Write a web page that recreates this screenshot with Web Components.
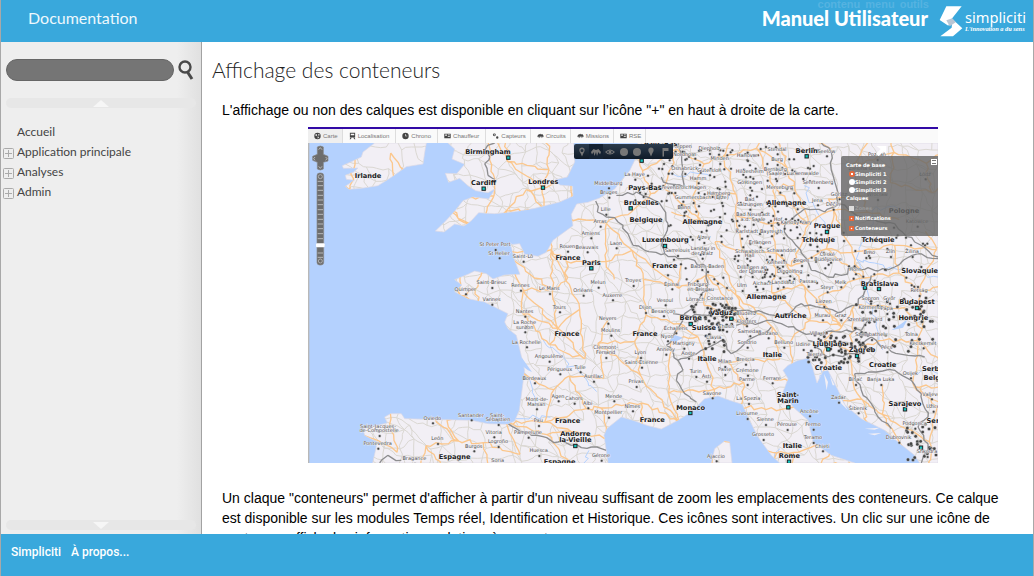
<!DOCTYPE html>
<html lang="fr">
<head>
<meta charset="utf-8">
<title>Affichage des conteneurs - Manuel Utilisateur</title>
<style>
html, body { margin: 0; height: 100%; }
body { font-family: "Liberation Sans", Arial, sans-serif; font-size: 14px; color: #000; overflow: hidden; }
</style>
</head>
<body>
<manual-page>
  <manual-header slot="header"></manual-header>
  <manual-sidebar slot="sidebar"></manual-sidebar>
  <manual-article slot="content" heading="Affichage des conteneurs">
    <p>L'affichage ou non des calques est disponible en cliquant sur l’icône "+" en haut à droite de la carte.</p>
    <map-figure></map-figure>
    <p>Un claque "conteneurs" permet d'afficher à partir d'un niveau suffisant de zoom les emplacements des conteneurs. Ce calque est disponible sur les modules Temps réel, Identification et Historique. Ces icônes sont interactives. Un clic sur une icône de conteneur affiche les informations relatives à ce conteneur.</p>
  </manual-article>
  <manual-footer slot="footer"></manual-footer>
</manual-page>

<script>
const define = (name, markup, setup) => {
  const template = document.createElement('template');
  template.innerHTML = markup;
  customElements.define(name, class extends HTMLElement {
    constructor() {
      super();
      this.attachShadow({ mode: 'open' }).append(template.content.cloneNode(true));
    }
    connectedCallback() { if (setup) setup(this.shadowRoot, this); }
  });
};

define('manual-header', `
<style>
:host { display: flex; align-items: center; justify-content: space-between; position: relative; height: 42px; background: #39a8dc; color: #fff; overflow: hidden; }
.doc { font: 400 16px/20px Lato, sans-serif; padding: 0 0 6px 27px; color: #eef8fd; text-decoration: none; }
.brand { display: flex; align-items: center; gap: 11px; padding-right: 6px; }
.title { font: 900 20px/22px Lato, sans-serif; padding-bottom: 6px; }
.skip { position: absolute; top: -2px; right: 104px; display: flex; gap: 5px; font: bold 11px/13px "Liberation Sans", sans-serif; }
.skip a { color: #55b3e1; text-decoration: none; }
svg { display: block; width: 88px; height: 36px; }
</style>
<a class="doc" href="#">Documentation</a>
<nav class="skip" aria-label="Accès rapide"><a href="#contenu">contenu</a><a href="#menu">menu</a><a href="#outils">outils</a></nav>
<div class="brand">
  <span class="title">Manuel Utilisateur</span>
  <svg viewBox="0 0 264 108" role="img" aria-label="simpliciti">
    <path d="M22 10H68L36 50 28 68 2 51ZM40 48L70 76 42 100H4L38 74Z" fill="#fff"/>
    <path d="M22 52L40 46 50 58 32 70Z" fill="#b9c6d4"/>
    <text x="78" y="61" font-family="Noto Sans, sans-serif" font-size="44" fill="#fff">simpliciti</text>
    <text x="78" y="85" font-family="Liberation Serif, serif" font-size="19" font-style="italic" font-weight="bold" fill="#fff">L'innovation a du sens</text>
  </svg>
</div>`);

define('scroll-bar', `
<style>
:host { display: block; }
button { display: flex; align-items: center; justify-content: center; width: 100%; height: 10px; padding: 0; border: 0; border-radius: 5px; background: #e7e7e7; }
svg { width: 16px; height: 7px; fill: #f6f6f6; }
:host([down]) svg { transform: rotate(180deg); }
</style>
<button type="button" aria-label="Faire défiler"><svg viewBox="0 0 16 7"><path d="M8 0L16 7H0Z"/></svg></button>`);

define('menu-item', `
<style>
:host { display: flex; align-items: center; gap: 3px; height: 20px; }
a { color: #444; text-decoration: none; font: 12px/20px Lato, sans-serif; }
button { width: 11px; height: 11px; padding: 0; border: 0; background: none; margin-top: 3px; }
svg { display: block; }
:host(:not([branch])) button { visibility: hidden; }
</style>
<button type="button" aria-label="Déplier"><svg width="11" height="11" viewBox="0 0 11 11" fill="none" stroke="#aaa"><rect x=".5" y=".5" width="10" height="10" rx="1"/><path d="M2 5.5H9M5.5 2V9"/></svg></button>
<a href="#"><slot></slot></a>`);

define('manual-sidebar', `
<style>
:host { display: flex; flex-direction: column; box-sizing: border-box; border-right: 1px solid #a2a2a2; background: linear-gradient(to right, transparent calc(100% - 24px), #e0e0e0), #eee; }
form { display: flex; align-items: center; gap: 4px; padding: 17px 7px 0 5px; }
input { flex: 1; min-width: 0; box-sizing: border-box; height: 22px; padding: 0 10px; border: 1px solid #666; border-radius: 11px; background: #757575; color: #fff; }
form button { padding: 0; border: 0; background: none; }
form svg { display: block; }
scroll-bar { margin: 17px 5px 14px; }
nav { flex: 1; padding: 0 0 0 2px; }
scroll-bar[down] { margin: 0 5px 4px; }
</style>
<form><input type="search" aria-label="Rechercher"><button type="button" aria-label="Lancer la recherche"><svg width="16" height="22" viewBox="0 0 16 22" fill="none" stroke="#494949"><circle cx="7" cy="8" r="5.5" stroke-width="2.4"/><path d="M9.5 13L14 20" stroke-width="3"/></svg></button></form>
<scroll-bar></scroll-bar>
<nav aria-label="Menu">
<menu-item>Accueil</menu-item>
<menu-item branch>Application principale</menu-item>
<menu-item branch>Analyses</menu-item>
<menu-item branch>Admin</menu-item>
</nav>
<scroll-bar down></scroll-bar>`);

define('manual-article', `
<style>
:host { display: block; padding: 16px 9px 0 10px; overflow: hidden; background: #fff; }
h1 { margin: 0 0 18px; font: 300 21px/24px Lato, sans-serif; color: #222; }
.body { padding-left: 10px; }
::slotted(p) { margin: 0 4px 7px 0; line-height: 20px; }
::slotted(map-figure) { margin: 0 auto 25px; }
</style>
<h1></h1><div class="body"><slot></slot></div>`, (root, host) => { root.querySelector('h1').textContent = host.getAttribute('heading'); });

define('manual-footer', `
<style>
:host { display: flex; gap: 10px; box-sizing: border-box; height: 42px; padding: 8px 10px; background: #39a8dc; }
a { color: #fff; text-decoration: none; font: 500 12px/20px Roboto, sans-serif; }
</style>
<a href="#">Simpliciti</a><a href="#">À propos...</a>`);

define('manual-page', `
<style>
:host { display: grid; grid-template: auto minmax(0, 1fr) auto / 201px minmax(0, 1fr); box-sizing: border-box; height: 100vh; border: solid #a8a8a8; border-width: 0 1px; }
slot[name=header]::slotted(*), slot[name=footer]::slotted(*) { grid-column: 1 / -1; }
</style>
<slot name="header"></slot><slot name="sidebar"></slot><slot name="content"></slot><slot name="footer"></slot>`);

define('map-tab', `
<style>
:host { display: block; }
:host([wide]) button { padding-right: 6px; }
button { display: flex; align-items: center; gap: 2px; box-sizing: border-box; height: 14px; padding: 0 4px 0 6px; border: 0; border-right: 1px solid #ddd; background: none; color: #777; font: 6px/14px "Liberation Sans", sans-serif; }
:host([active]) button { background: #efefef; }
svg { width: 7px; height: 8px; }
</style>
<button type="button"><svg viewBox="0 0 24 24" fill="#444"><path/></svg><slot></slot></button>`, (root, host) => {
  const shapes = {
    globe: 'M12 1A11 11 0 1 0 12 23 11 11 0 0 0 12 1ZM4 8L9 5 11 9 7 13ZM14 4L20 8 16 12ZM12 14L18 15 13 21Z',
    train: 'M3 1H21V17H3ZM6 4V9H18V4ZM5 18H9L6 23H2ZM15 18H19L22 23H18Z',
    clock: 'M12 1A11 11 0 1 0 12 23 11 11 0 0 0 12 1ZM11 5V13H18V11H13V5Z',
    card: 'M1 4H23V20H1ZM4 7V11H10V7ZM13 7V9H20V7ZM13 13V15H20V13Z',
    gears: 'M8 3A5 5 0 1 0 8 13 5 5 0 0 0 8 3ZM8 6A2 2 0 1 1 8 10 2 2 0 0 1 8 6ZM18 13A4 4 0 1 0 18 21 4 4 0 0 0 18 13Z',
    truck: 'M1 12L7 5 11 7 12 3 14 7 18 5 23 12 20 18 17 12 14 20 12 12 9 20 7 12 4 18Z'
  };
  const path = root.querySelector('path');
  path.setAttribute('d', shapes[host.getAttribute('icon')]);
  path.setAttribute('fill-rule', 'evenodd');
});

define('layer-panel', `
<style>
:host { display: block; box-sizing: border-box; padding: 5px 5px 3px; border-radius: 2px 0 0 2px; background: rgba(102,102,102,.82); color: #fff; font: bold 5px/8px "DejaVu Sans", sans-serif; }
fieldset { margin: 0; padding: 0; border: 0; }
legend { padding: 0; height: 9px; }
label { display: flex; align-items: center; height: 8px; padding-left: 3px; }
.boxes label { height: 10px; }
.off { color: #999; }
input { appearance: none; width: 6px; height: 6px; margin: 0; background: #fff; }
input[type=radio] { border-radius: 50%; }
input:checked { background: radial-gradient(#fff 20%, #e5683a 30%); }
input[type=checkbox] { width: 5px; height: 5px; margin-right: 1px; }
input:disabled { background: #ddd; }
button { position: absolute; top: 3px; right: 1px; width: 6px; height: 6px; padding: 0; border: 1px solid #fff; background: linear-gradient(#777 25%, #fff 25% 75%, #777 75%); }
</style>
<button type="button" aria-label="Réduire"></button>
<fieldset><legend>Carte de base</legend>
<label><input type="radio" name="base" checked>Simpliciti 1</label>
<label><input type="radio" name="base">Simpliciti 2</label>
<label><input type="radio" name="base">Simpliciti 3</label></fieldset>
<fieldset class="boxes"><legend>Calques</legend>
<label class="off"><input type="checkbox" disabled>Zones</label>
<label><input type="checkbox" checked>Notifications</label>
<label><input type="checkbox" checked>Conteneurs</label></fieldset>`);

define('map-tools', `
<style>
:host { display: flex; box-sizing: border-box; padding: 0 1px; border-radius: 2px; background: linear-gradient(#2b3b4c, #101b28); }
button { flex: 1; display: grid; place-items: center; height: 15px; padding: 0; border: 0; background: none; }
button:nth-child(3) { background: #142232; }
svg { width: 10px; height: 10px; fill: #777; stroke: none; }
</style>
<button aria-label="Repère"><svg viewBox="0 0 20 20"><path fill-rule="evenodd" d="M10 1C3 1 4 9 7 12L10 19 13 12C16 9 17 1 10 1ZM10 4A3 3 0 1 1 10 10 3 3 0 0 1 10 4Z"/></svg></button>
<button aria-label="Véhicules"><svg viewBox="0 0 20 20"><path d="M0 10L5 4 10 6 15 4 20 10 18 15 15 10 12 18 10 10 7 18 5 10 2 15Z"/></svg></button>
<button aria-label="Visibilité"><svg viewBox="0 0 20 20"><path fill-rule="evenodd" d="M0 10Q10 0 20 10 10 20 0 10ZM3 10Q10 16 17 10 10 4 3 10Z"/><circle cx="10" cy="10" r="3"/></svg></button>
<button aria-label="Cercle"><svg viewBox="0 0 20 20"><circle cx="10" cy="10" r="8"/></svg></button>
<button aria-label="Zone"><svg viewBox="0 0 20 20"><circle cx="10" cy="10" r="8"/></svg></button>
<button aria-label="Point"><svg viewBox="0 0 20 20"><path d="M10 1C3 1 4 9 7 12L10 19 13 12C16 9 17 1 10 1Z"/></svg></button>
<button aria-label="Drapeau"><svg viewBox="0 0 20 20"><path d="M5 2H17V8H8V19H5Z"/></svg></button>`);

const LAND = [
  'M200 48L165 75 160 90 130 104 103 116 106 124 150 123 136 136 112 145 115 157 139 160 112 178 124 187 160 184 210 176 250 151 295 119 345 111 350 77 355 48Z',
  'M420 48L440 66 432 96 470 112 446 140 412 139 422 166 455 154 480 176 503 191 540 197 562 185 542 216 495 210 465 221 440 253 410 285 382 312 408 315 440 291 468 297 490 281 512 257 560 260 620 254 680 244 755 225 795 207 794 178 755 174 742 158 778 150 800 105 797 48Z',
  'M1890 48H990L984 92 965 131 940 161 920 186 875 213 840 226 806 231 790 262 795 296 735 340 715 376 690 388 650 382 635 350 608 353 620 400 636 442 590 444 555 456 535 440 500 432 480 442 440 458 462 474 440 494 480 515 530 525 570 545 600 560 590 585 600 605 625 625 636 670 650 730 642 790 634 850 620 882 600 892 540 890 490 880 400 878 290 875 280 860 248 860 230 870 238 888 165 905 170 925 208 945 194 1008H900L888 925 896 905 940 870 975 880 1020 896 1060 906 1110 880 1150 855 1190 815 1230 807 1265 820 1303 832 1320 870 1350 930 1390 985 1415 1008H1640L1570 985 1515 945 1500 880 1455 840 1425 795 1440 755 1425 730 1440 715 1470 700 1503 693 1515 725 1527 768 1545 732 1560 730 1588 785 1612 835 1660 875 1730 910 1770 945 1820 985 1835 1008H1890Z',
  'M1220 965L1250 942 1265 945 1272 1008H1210Z'
];
const BORDERS = [
  'M560 48L530 70 545 90 530 110 540 145 560 158',
  'M863 222L868 255 930 285 960 320 975 355 1010 370 1070 380 1110 395 1160 400 1195 425 1200 470 1165 530 1125 570 1095 630 1075 655 1110 700 1125 730 1105 760 1130 800 1165 825',
  'M925 205L985 195 1050 225 1065 245 1080 290 1065 335 1070 380M1060 150L1080 170 1130 180 1125 130 1110 48',
  'M1540 48L1570 75 1570 130 1585 180 1590 230 1550 255 1490 245 1430 295 1440 330 1495 395 1510 430 1560 450 1600 445 1640 420 1700 430 1760 420 1830 380 1890 395M1590 230L1680 280 1760 290 1820 345 1890 390',
  'M1095 560L1150 570 1260 545 1320 550 1420 570 1480 530 1600 555 1650 535 1690 445M1285 595L1390 580 1440 600 1510 620 1600 615 1660 610 1680 580',
  'M1110 700L1180 670 1240 640 1270 680 1310 650 1390 600M1500 640L1560 690 1640 680 1690 630 1720 660 1800 685 1850 690',
  'M1640 740L1680 735 1760 730 1810 760 1840 800 1860 870 1830 900 1860 950 1840 1008M1640 740L1660 790 1690 830 1710 870 1750 905',
  'M600 890L625 905 670 925 750 945 790 955 850 960 895 970M215 1008L240 985 280 1000'
];
const T = (c, r, s) => s.split('|').map(e => { const a = e.split(','); return [a[0], +a[1] + c * 630, +a[2] + (r ? 495 : -9)]; });
const COUNTRIES = [
  ...T(0, 0, 'Birmingham,540,90|Irlande,180,163|Cardiff,527,183'),
  ...T(1, 0, 'Pays-Bas,428,67|Londres,76,180|Pays-Bas,381,198|Bruxelles,370,242|Belgique,384,294|Allemagne,553,299|Luxembourg,442,355|France,150,407|Paris,220,422|France,440,432'),
  ...T(2, 0, 'Berlin,236,86|Allemagne,175,242|Prague,297,313|Tchéquie,271,355|Tchéquie,450,355|Pologne,528,268|Slovaquie,575,448|Bratislava,455,486'),
  ...T(0, 1, 'Espagne,440,501'),
  ...T(1, 1, 'France,147,131|France,381,131|Berne,518,84|Suisse,558,115|Italie,567,207|Vaduz,610,68|Monaco,518,353|France,149,392|France,403,389|Andorre,172,431|la-Vieille,172,449|Espagne,125,516'),
  ...T(2, 1, 'Allemagne,115,21|Autriche,188,77|Budapest,567,37|Hongrie,556,84|Ljubljana,305,162|Zagreb,402,181|Italie,133,195|Croatie,301,233|Croatie,464,224|Serbie,618,236|Belgrade,637,263|Saint-,180,315|Marin,180,334|Sarajevo,531,342|Serbie,632,394|Italie,193,467|Rome,184,498')
];
const TOWNS = [
  ...T(0, 0, 'St Peter Port,561,367|St Helier,573,392|Saint-Brieuc,551,481|Quimper,472,500'),
  ...T(1, 0, 'Middelburg,271,182|Bruges,272,210|La Haye,350,156|Meppen,492,72|Nordhorn,500,96|Diepholz,574,79|Minden,605,109|Osnabrück,500,139|Gütersloh,574,143|Hamm,540,167|Grevenbroich,470,196|Hagen,540,196|Gummersbach,525,226|Homberg,602,212|(Efze),610,226|Bonn,498,255|Lille,263,261|Arras,246,297|Amiens,218,332|Laon,294,362|Rouen,148,372|Beauvais,207,374|Sarrelouis,478,385|Alzey,557,346|Landau in,555,379|der Pfalz,552,393|Baden-Baden,568,433|Saint-Lô,15,402|Rennes,7,489|Melun,240,480|Troyes,345,475|Épinal,461,485|Fribourg-,542,485|en-Brisgau,548,501|Le Mans,94,499|Orléans,195,504'),
  ...T(2, 0, 'Stendal,147,80|Seelow,295,86|Poznań,447,97|Hanovre,58,100|Burg,147,112|Bernburg,142,140|(Saale),142,154|Luckenwalde,224,154|Hildesheim,65,148|Göttingen,65,180|Merseburg,155,195|Senftenberg,270,181|Zielona Góra,410,139|Łódź,591,155|Bad,65,232|Salzungen,65,246|Görlitz,333,215|Jena,268,233|Děčín,315,246|Wrocław,448,217|Bad Neustadt,75,277|a.d. Saale,75,291|Hof,150,291|Karlovy Vary,205,299|Katowice,567,297|Karlstadt,57,326|Bayreuth,130,326|Erlangen,96,359|Schwabisch,65,386|Hall,65,400|Schwandorf,160,383|Kelheim,147,419|Regen,220,415|České,298,397|Budějovice,300,411|Brno,424,391|Zlín,487,388|Žilina,552,388|Dillingen an,72,434|der Donau,72,448|Dingolfing,185,446|Horn,382,440|Ulm,42,490|Aichach,104,484|Landshut,165,479|Passau,240,477|Melk,338,479|Steyr,297,494|Retság,573,505'),
  ...T(0, 1, 'Vannes,551,27|Nantes,650,63|La Roche,650,96|sur-Yon,650,110|La Rochelle,655,155|Oviedo,373,383|Santander,489,374|Saint-,568,374|Sébastien,570,388|Saint-Jacques-,210,407|de-Compostelle,213,421|Vitoria,557,425|Logroño,570,454|León,388,445|Burgos,497,467|Pontevedra,209,459|Bragance,319,505|Soria,569,511'),
  ...T(1, 1, 'Auxerre,283,14|Tours,124,50|Dijon,382,52|Besançon,436,62|Vesoul,441,29|Lörrach,532,27|Constance,606,25|Nevers,269,84|Moulins,278,120|Échallens,473,113|Nyon,448,137|Clermont-,263,172|Ferrand,263,187|Lyon,367,187|Annecy,443,177|Martigny,497,159|Saint-Étienne,370,216|Angoulême,93,198|Périgueux,125,236|Tulle,186,230|Aurillac,226,258|Privas,354,274|Bordeaux,49,263|Aoste,511,189|Turin,533,244|Asti,565,258|Savone,582,308|Agen,120,317|Cahors,168,324|Mende,287,317|Mont-de-,57,327|Marsan,55,341|Albi,209,338|Nîmes,343,347|Montpellier,271,366|Pau,61,391|Pampelune,30,426|Huesca,62,481|Gérone,249,495|Ajaccio,594,497|Clavia,587,140|Milan,620,214|Pavie,620,238|Thusis,625,108'),
  ...T(2, 1, 'Liezen,287,34|Bludenz,55,70|Klosters,55,92|Murau,283,74|Graz,338,74|Samedan,65,122|Bolzano,120,128|Sondrio,57,156|Belluno,167,156|Brescia,52,207|Crémone,58,240|Ferrare,132,263|Parme,57,268|La Spezia,61,325|Livourne,57,370|Sienne,112,388|Pérouse,177,403|Grosseto,105,433|Ancône,244,362|Fermo,255,402|Teramo,255,442|Chieti,283,467|Zadar,331,321|Šibenik,390,353|Bihać,382,268|Banja Luka,458,268|Osijek,547,248|Dubrovnik,512,441|Podgorica,560,399|Shkodra,597,484|Sopron,427,24|Győr,484,24|Körmend,425,50|Pápa,476,55|Szentgotthárd,410,88|Villach,270,130|Udine,225,163|Trieste,260,193|Pécs,476,170|Kecskemét,585,158|Tolna,550,133|Szombathely,430,133|Valjevo,610,311|Užice,615,348')
];

define('map-figure', `
<style>
:host { display: block; width: 630px; max-width: 100%; }
.bar { border-top: 2px solid #320aa6; background: #fafafa; }
nav { display: flex; height: 14px; }
.view { position: relative; }
.view > svg { display: block; width: 100%; }
map-tools { position: absolute; top: 1px; left: 266px; width: 99px; }
layer-panel { position: absolute; top: 13px; right: 0; width: 97px; height: 80px; }
text { text-anchor: middle; font-family: "DejaVu Sans", sans-serif; paint-order: stroke; stroke: #f5f3f7; stroke-width: 2px; }
.town { font-size: 15px; fill: #4c4c4c; }
.country { font-size: 20px; font-weight: bold; fill: #222; }
</style>
<div class="bar"><nav aria-label="Modules">
<map-tab icon="globe" active>Carte</map-tab><map-tab icon="train" wide>Localisation</map-tab><map-tab icon="clock" wide>Chrono</map-tab><map-tab icon="card" wide>Chauffeur</map-tab><map-tab icon="gears">Capteurs</map-tab><map-tab icon="truck">Circuits</map-tab><map-tab icon="truck">Missions</map-tab><map-tab icon="card">RSE</map-tab>
</nav></div>
<div class="view">
<svg viewBox="0 48 1890 960" role="img" aria-label="Carte de l'Europe">
<defs><clipPath id="land"></clipPath></defs>
<rect y="48" width="1890" height="960" fill="#b4d1fe"/>
<g id="ground" fill="#f2eff5" stroke="#dcd9e5" stroke-width="2"></g>
<g fill="none" clip-path="url(#land)"><path id="minor" stroke="#dad7d2" stroke-width="3"/><path id="rivers" stroke="#b4d1fe" stroke-width="3"/><path id="major" stroke="#fbc78d" stroke-width="4"/><g id="borders" stroke="#8e8e90" stroke-width="4" stroke-linejoin="round"></g></g>
<path fill="#b4d1fe" d="M1085 640L1100 624 1125 632 1100 646ZM1750 610L1780 590 1800 575 1785 602ZM640 690L672 735 660 730 640 715Z"/>
<path fill="#f2eff5" d="M1548 740L1560 765 1556 790ZM1565 745L1580 775 1574 775ZM1590 800L1620 850 1600 830ZM1670 905L1715 902 1700 908ZM1680 920L1720 918 1700 925Z"/>
<g id="dots"></g><g id="labels"></g>
<path fill="#fff" d="M1705 57H1735V82L1726 73 1712 88 1704 80 1718 66Z"/>
<g fill="#6d6d6d" stroke="#888" stroke-width="2"><path d="M28 60Q37 54 46 60V82L60 88V102L46 106V126Q37 132 28 126V106L14 100V88L28 82Z"/><rect x="27" y="138" width="20" height="276" rx="8"/></g>
<path stroke="#ddd" stroke-width="2" fill="none" d="M32 68L37 62 42 68M32 118L37 124 42 118M21 90L17 95 21 100M53 90L57 95 53 100M29 163H45M29 176H45M29 190H45M29 205H45M29 219H45M29 233H45M29 248H45M29 262H45M29 277H45M29 291H45M29 305H45M29 320H45M29 335H45M29 378H45M29 391H45"/>
<g fill="none" stroke="#ccc" stroke-width="2"><circle cx="37" cy="149" r="6"/><circle cx="37" cy="402" r="6"/></g>
<rect x="24" y="349" width="26" height="12" rx="3" fill="#fff"/>
<rect y="48" width="4" height="960" fill="#b8b8b8"/>
</svg>
<map-tools></map-tools>
<layer-panel></layer-panel>
</div>`, root => {
  const ns = 'http://www.w3.org/2000/svg';
  const $ = id => root.getElementById(id);
  const add = (parent, tag, attrs, text) => {
    const el = document.createElementNS(ns, tag);
    for (const k in attrs) el.setAttribute(k, attrs[k]);
    if (text) el.textContent = text;
    parent.append(el);
    return el;
  };
  let seed = 7;
  const rnd = () => (seed = (seed * 16807) % 2147483647) / 2147483647;
  for (const d of LAND) { add($('ground'), 'path', { d }); add($('land'), 'path', { d }); }

  // Breaks a straight run into short irregular steps, as on a drawn road.
  const wander = (a, b, amount) => {
    const n = Math.max(2, Math.round(Math.hypot(b[0] - a[0], b[1] - a[1]) / 16));
    let d = `M${a[0]} ${a[1]}`;
    for (let i = 1; i < n; i++) d += `L${Math.round(a[0] + (b[0] - a[0]) * i / n + (rnd() - .5) * amount)} ${Math.round(a[1] + (b[1] - a[1]) * i / n + (rnd() - .5) * amount)}`;
    return d + `L${b[0]} ${b[1]}`;
  };
  // A road mesh over a jittered grid of junctions.
  const mesh = (step, amount, keep) => {
    const cols = Math.ceil(1890 / step) + 2, rows = Math.ceil(960 / step) + 2, p = [];
    for (let j = 0; j < rows; j++) for (let i = 0; i < cols; i++)
      p.push([Math.round((i - .5 + (rnd() - .5) * .8) * step), Math.round(48 + (j - .5 + (rnd() - .5) * .8) * step)]);
    let d = '';
    for (let j = 0; j < rows - 1; j++) for (let i = 0; i < cols - 1; i++) {
      const k = j * cols + i;
      if (rnd() < keep) d += wander(p[k], p[k + 1], amount);
      if (rnd() < keep) d += wander(p[k], p[k + cols], amount);
      if (rnd() < keep * .4) d += wander(p[k], p[k + cols + 1], amount);
    }
    return d;
  };
  $('minor').setAttribute('d', mesh(42, 10, .85));
  $('major').setAttribute('d', mesh(95, 12, .65));
  $('rivers').setAttribute('d', mesh(160, 20, .12));
  for (const d of BORDERS) {
    let out = '';
    for (const r of d.split('M').filter(Boolean)) {
      const n = r.match(/\d+/g).map(Number);
      for (let i = 0; i + 3 < n.length; i += 2) out += wander([n[i], n[i + 1]], [n[i + 2], n[i + 3]], 12);
    }
    add($('borders'), 'path', { d: out });
  }

  const dot = (x, y, r) => {
    add($('dots'), 'circle', { cx: x, cy: y, r: r + 2, fill: '#aaa', 'fill-opacity': .6 });
    add($('dots'), 'circle', { cx: x, cy: y, r, fill: '#444' });
  };
  const scatter = (n, x, y, w, h, r) => { for (let i = 0; i < n; i++) dot(Math.round(x + rnd() * w), Math.round(y + rnd() * h), r); };
  scatter(70, 1070, 60, 180, 420, 3);
  scatter(130, 1250, 60, 280, 430, 3);
  scatter(40, 1480, 300, 380, 190, 3);
  scatter(50, 1150, 530, 135, 65, 4);
  scatter(16, 1180, 590, 80, 110, 4);
  scatter(64, 1500, 615, 180, 95, 4);
  scatter(50, 1640, 510, 240, 170, 4);
  scatter(26, 1790, 890, 95, 110, 4);
  scatter(14, 970, 110, 100, 120, 3);
  for (const [, x, y] of TOWNS) dot(x + 2, y + 11, 3);
  for (const [t, x, y] of TOWNS) add($('labels'), 'text', { x, y, class: 'town' }, t);
  for (const [t, x, y] of COUNTRIES) add($('labels'), 'text', { x, y, class: 'country' }, t);
  const capitals = [[601, 92], [527, 185], [705, 182], [1001, 101], [968, 244], [1071, 357], [850, 424], [1496, 88], [1557, 315], [1671, 482], [1713, 486], [1148, 591], [1270, 575], [1827, 543], [1561, 667], [1647, 687], [1147, 858], [802, 957], [1441, 841], [1791, 847], [1443, 1004], [1839, 962]];
  for (const [x, y] of capitals) add($('dots'), 'rect', { x: x - 5, y: y - 5, width: 10, height: 10, fill: '#15c5c0', stroke: '#222', 'stroke-width': 3 });
});
</script>
</body>
</html>
